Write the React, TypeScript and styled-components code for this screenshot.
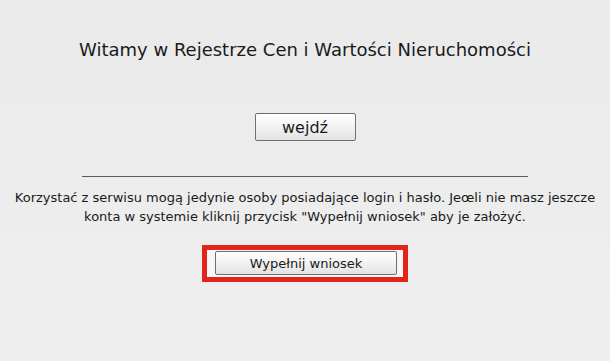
import React from 'react';
import styled, { createGlobalStyle } from 'styled-components';

const GlobalStyle = createGlobalStyle`
  html, body {
    margin: 0;
    padding: 0;
    background: #ececec;
  }
  body {
    font-family: "DejaVu Sans", Verdana, sans-serif;
    color: #1a1a1a;
  }
`;

const Page = styled.div`
  width: 610px;
  height: 361px;
  background: linear-gradient(#eaeaea, #efefef);
  display: flex;
  flex-direction: column;
  align-items: center;
  box-sizing: border-box;
  padding-top: 39px;
`;

const Title = styled.h1`
  margin: 0;
  font-size: 18px;
  font-weight: normal;
  line-height: 22px;
`;

const Button = styled.button<{ $wide?: boolean }>`
  font-family: "DejaVu Sans", Verdana, sans-serif;
  font-size: ${p => (p.$wide ? '13px' : '16px')};
  color: #1a1a1a;
  width: ${p => (p.$wide ? '182px' : '101px')};
  height: ${p => (p.$wide ? '24px' : '28px')};
  padding: 0;
  border: 1px solid #6f6f6f;
  border-radius: 2px;
  background: linear-gradient(#ffffff, #f2f2f2 50%, #e2e2e2);
  cursor: pointer;
`;

const EnterRow = styled.div`
  margin-top: 52px;
`;

const Divider = styled.hr`
  width: 446px;
  margin: 35px 0 0;
  border: none;
  border-top: 1px solid #5a5a5a;
  height: 0;
`;

const Info = styled.p`
  margin: 11px 0 0;
  font-size: 13px;
  line-height: 19px;
  text-align: center;
  width: 604px;
`;

const Highlight = styled.div`
  margin-top: 19px;
  border: 5px solid #e1251b;
  padding: 1px 6px 2px 8px;
  background: #f6f6f6;
`;

export default function App() {
  return (
    <>
      <GlobalStyle />
      <Page>
        <Title>Witamy w Rejestrze Cen i Wartości Nieruchomości</Title>
        <EnterRow>
          <Button>wejdź</Button>
        </EnterRow>
        <Divider />
        <Info>
          Korzystać z serwisu mogą jedynie osoby posiadające login i hasło. Jeœli nie masz jeszcze
          <br />
          konta w systemie kliknij przycisk "Wypełnij wniosek" aby je założyć.
        </Info>
        <Highlight>
          <Button $wide>Wypełnij wniosek</Button>
        </Highlight>
      </Page>
    </>
  );
}
